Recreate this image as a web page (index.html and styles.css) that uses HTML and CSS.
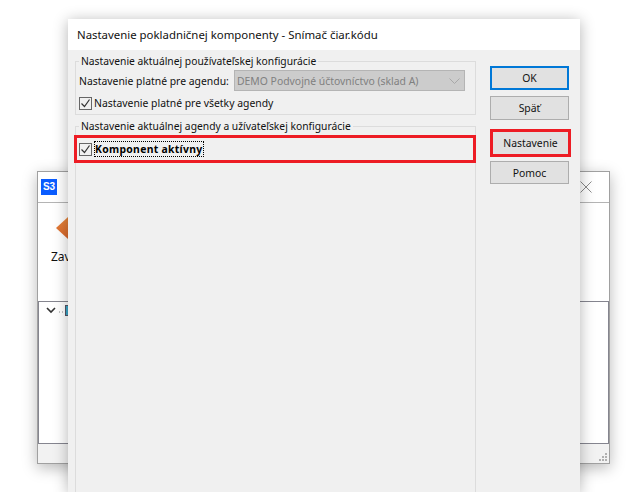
FILE: index.html
```html
<!DOCTYPE html>
<html lang="sk">
<head>
<meta charset="utf-8">
<title>Nastavenie pokladničnej komponenty</title>
<link rel="stylesheet" href="styles.css">
</head>
<body>
<div class="backwin">
  <div class="back-title">
    <span class="s3">S3</span>
    <svg class="back-x" width="12" height="12" viewBox="0 0 12 12"><path d="M.5.500l11 11M11.500.500l-11 11" stroke="#8a8a8a" fill="none"/></svg>
  </div>
  <div class="back-toolbar">
    <svg class="back-arrow" width="12" height="22" viewBox="0 0 12 22"><defs><linearGradient id="ar" x1="0" y1="0" x2="0" y2="1"><stop offset="0" stop-color="#e8873c"/><stop offset="1" stop-color="#d9652a"/></linearGradient></defs><path d="M12 0v22L0 11z" fill="url(#ar)"/></svg>
    <span class="back-label">Zav</span>
  </div>
  <div class="back-list">
    <svg class="tree-chev" width="10" height="7" viewBox="0 0 10 7"><path d="M1 1l4 4 4-4" stroke="#333" stroke-width="1.600" fill="none"/></svg>
    <svg class="tree-node" width="12" height="12" viewBox="0 0 12 12"><path d="M0 7h1M3 7h1" stroke="#888" fill="none"/><rect x="6.500" y=".5" width="5" height="10" fill="#3aa6c8" stroke="#556"/></svg>
  </div>
  <div class="back-status">
    <svg class="grip" width="9" height="9" viewBox="0 0 9 9"><path d="M6 0h2v2H6zM3 3h2v2H3zM6 3h2v2H6zM0 6h2v2H0zM3 6h2v2H3zM6 6h2v2H6z" fill="#b0b0b0"/></svg>
  </div>
</div>
<div class="dialog">
  <div class="dlg-title">Nastavenie pokladničnej komponenty - Snímač čiar.kódu</div>
  <div class="dlg-body">
    <div class="dlg-main">
      <fieldset class="group group-top">
        <legend class="legend">Nastavenie aktuálnej používateľskej konfigurácie</legend>
        <div class="field-row">
          <label class="field-label">Nastavenie platné pre agendu:</label>
          <div class="select"><span>DEMO Podvojné účtovníctvo (sklad A)</span>
            <svg width="11" height="6" viewBox="0 0 11 6"><path d="M.5.500l5 5 5-5" stroke="#a8a8a8" fill="none"/></svg>
          </div>
        </div>
        <div class="check-row">
          <span class="check"><svg width="11" height="11" viewBox="0 0 11 11"><path d="M1.500 5.500l3 3 5-7" stroke="#333" stroke-width="1.200" fill="none"/></svg></span>
          <span>Nastavenie platné pre všetky agendy</span>
        </div>
      </fieldset>
      <fieldset class="group group-bottom">
        <legend class="legend">Nastavenie aktuálnej agendy a užívateľskej konfigurácie</legend>
        <div class="highlight">
          <span class="check"><svg width="11" height="11" viewBox="0 0 11 11"><path d="M1.500 5.500l3 3 5-7" stroke="#333" stroke-width="1.200" fill="none"/></svg></span>
          <span class="focus-label">Komponent aktívny</span>
        </div>
      </fieldset>
    </div>
    <div class="dlg-side">
      <button class="btn btn-default">OK</button>
      <button class="btn btn-back">Späť</button>
      <button class="btn btn-marked">Nastavenie</button>
      <button class="btn btn-help">Pomoc</button>
    </div>
  </div>
</div>
</body>
</html>
```
FILE: styles.css
```css
html, body { margin: 0; padding: 0; width: 642px; height: 492px; overflow: hidden; background: #fff; }
body { position: relative; font-family: "Noto Sans", sans-serif; font-size: 10.4px; color: #111; }

.backwin { position: absolute; left: 37px; top: 171px; width: 571px; height: 291px; border: 1px solid #a0a0a0; background: #f2f2f2; box-shadow: 0 4px 14px rgba(0,0,0,.28); display: flex; flex-direction: column; }
.back-title { height: 30px; background: #fff; border-bottom: 1px solid #b4b4b4; display: flex; align-items: center; justify-content: space-between; padding: 0 17px 0 3px; flex: none; }
.s3 { width: 16px; height: 16px; background: #0a5cff; color: #fff; font: bold 10px/16px "Liberation Sans", sans-serif; text-align: center; }
.back-toolbar { height: 98px; background: #fff; flex: none; position: relative; }
.back-arrow { position: absolute; left: 18px; top: 14px; }
.back-label { position: absolute; left: 13px; top: 45px; font-size: 12px; }
.back-list { height: 141px; background: #fff; border: 1px solid #85858f; flex: none; position: relative; }
.tree-chev { position: absolute; left: 7px; top: 5px; }
.tree-node { position: absolute; left: 20px; top: 3px; }
.back-status { flex: 1; position: relative; }
.grip { position: absolute; right: 1px; bottom: 1px; }

.dialog { position: absolute; left: 68px; top: 19px; width: 512px; height: 473px; overflow: hidden; background: #f0f0f0; box-shadow: 0 2px 14px rgba(0,0,0,.3); }
.dlg-title { height: 31px; background: #fff; font-size: 11.4px; line-height: 31px; padding-left: 9px; color: #111; }
.dlg-body { display: flex; padding: 5px 11px 0 7px; }
.dlg-main { width: 401px; display: flex; flex-direction: column; gap: 5px; }
.group { margin: 0; min-width: 0; border: 1px solid #dcdcdc; padding: 0 0 0 3px; box-sizing: border-box; }
.group-top { height: 60px; }
.group-bottom { height: 420px; }
.legend { padding: 0 2px; margin-left: 0; line-height: 13px; height: 13px; font-size: 10.3px; }
.field-row { display: flex; align-items: center; height: 21px; margin-top: 2px; }
.field-label { width: 155px; flex: none; }
.select { width: 231px; box-sizing: border-box; height: 21px; background: #ccc; border: 1px solid #b4b4b4; color: #808080; display: flex; align-items: center; justify-content: space-between; padding: 0 4px 0 2px; }
.check-row { display: flex; align-items: center; gap: 2px; margin-top: 4px; height: 16px; }
.check { width: 11px; height: 11px; border: 1px solid #666; background: #f0f0f0; flex: none; }
.check svg { display: block; }
.highlight { box-sizing: border-box; margin: 2px 0 0 -5px; width: 402px; height: 28px; border: 3px solid #ed1c24; display: flex; align-items: center; padding-left: 2px; gap: 2px; }
.focus-label { font-weight: bold; outline: 1px dotted #000; outline-offset: -1px; padding: 0 1px; line-height: 16px; letter-spacing: .3px; color: #000; }

.dlg-side { width: 79px; margin-left: 14px; margin-top: 11px; display: flex; flex-direction: column; align-items: flex-start; }
.btn { width: 79px; height: 24px; flex: none; background: #e1e1e1; border: 1px solid #adadad; font: 10.4px "Noto Sans", sans-serif; color: #111; padding: 0; }
.btn-default { border: 2px solid #0078d7; }
.btn-back { margin-top: 6px; }
.btn-marked { margin-top: 9px; width: 81px; height: 28px; border: 3px solid #ed1c24; }
.btn-help { margin-top: 4px; height: 23px; }
```
